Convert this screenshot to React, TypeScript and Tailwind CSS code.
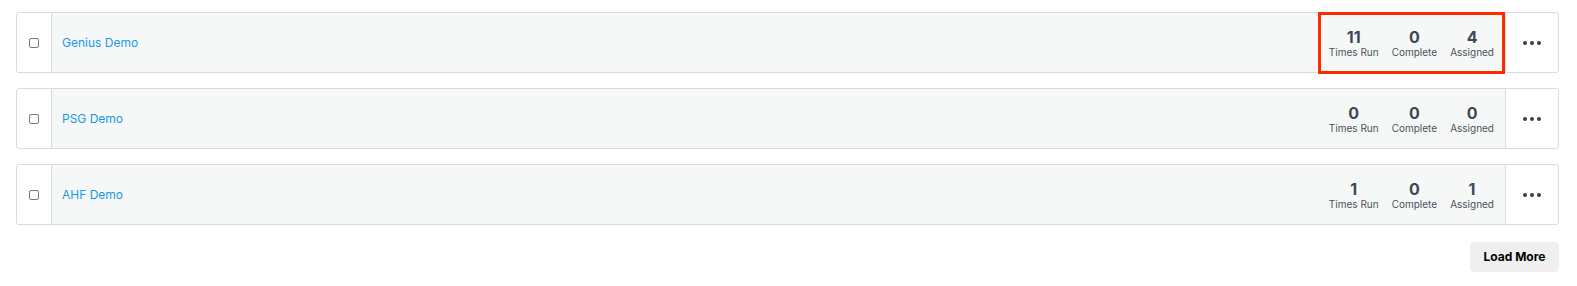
import React from 'react';

type Item = { name: string; run: number; complete: number; assigned: number; highlight?: boolean };

const items: Item[] = [
  { name: 'Genius Demo', run: 11, complete: 0, assigned: 4, highlight: true },
  { name: 'PSG Demo', run: 0, complete: 0, assigned: 0 },
  { name: 'AHF Demo', run: 1, complete: 0, assigned: 1 },
];

function Stat({ value, label }: { value: number; label: string }) {
  return (
    <div className="flex flex-col items-center">
      <span className="text-[16px] leading-[17px] font-bold text-[#3e4853]">{value}</span>
      <span className="text-[10px] leading-[12px] text-[#4a525b]">{label}</span>
    </div>
  );
}

function Row({ item }: { item: Item }) {
  return (
    <div className="relative flex h-[61px] rounded-[3px] border border-[#d6dde2] bg-white">
      <div className="flex w-[35px] shrink-0 items-center justify-center border-r border-[#d6dde2]">
        <input
          type="checkbox"
          className="h-[10px] w-[10px] appearance-none rounded-[2px] border border-[#7b7b7b] bg-white"
        />
      </div>
      <div className="flex flex-1 items-center bg-[#f6f8f8] pl-[10px]">
        <a href="#" className="text-[12px] text-[#1a98e4]">
          {item.name}
        </a>
        <div className="ml-auto flex items-center gap-[13px] pl-[10px] pr-[11px] pt-[2px]">
          <Stat value={item.run} label="Times Run" />
          <Stat value={item.complete} label="Complete" />
          <Stat value={item.assigned} label="Assigned" />
        </div>
      </div>
      <div className="flex w-[53px] shrink-0 items-center justify-center gap-[3px] border-l border-[#d6dde2]">
        <span className="h-[4px] w-[4px] rounded-full bg-[#3a4048]" />
        <span className="h-[4px] w-[4px] rounded-full bg-[#3a4048]" />
        <span className="h-[4px] w-[4px] rounded-full bg-[#3a4048]" />
      </div>
      {item.highlight && (
        <div className="pointer-events-none absolute -top-px -bottom-[2px] right-[53px] w-[187px] border-[3px] border-[#ff2a00]" />
      )}
    </div>
  );
}

export default function App() {
  return (
    <div className="min-h-[286px] bg-white pl-[16px] pr-[18px] pt-[12px]" style={{ fontFamily: 'Inter, "Liberation Sans", sans-serif' }}>
      <div className="flex flex-col gap-[15px]">
        {items.map((it) => (
          <Row key={it.name} item={it} />
        ))}
      </div>
      <div className="mt-[17px] flex justify-end">
        <button
          type="button"
          className="h-[30px] w-[89px] rounded-[4px] bg-[#efefef] text-[12px] font-bold text-black"
        >
          Load More
        </button>
      </div>
    </div>
  );
}
